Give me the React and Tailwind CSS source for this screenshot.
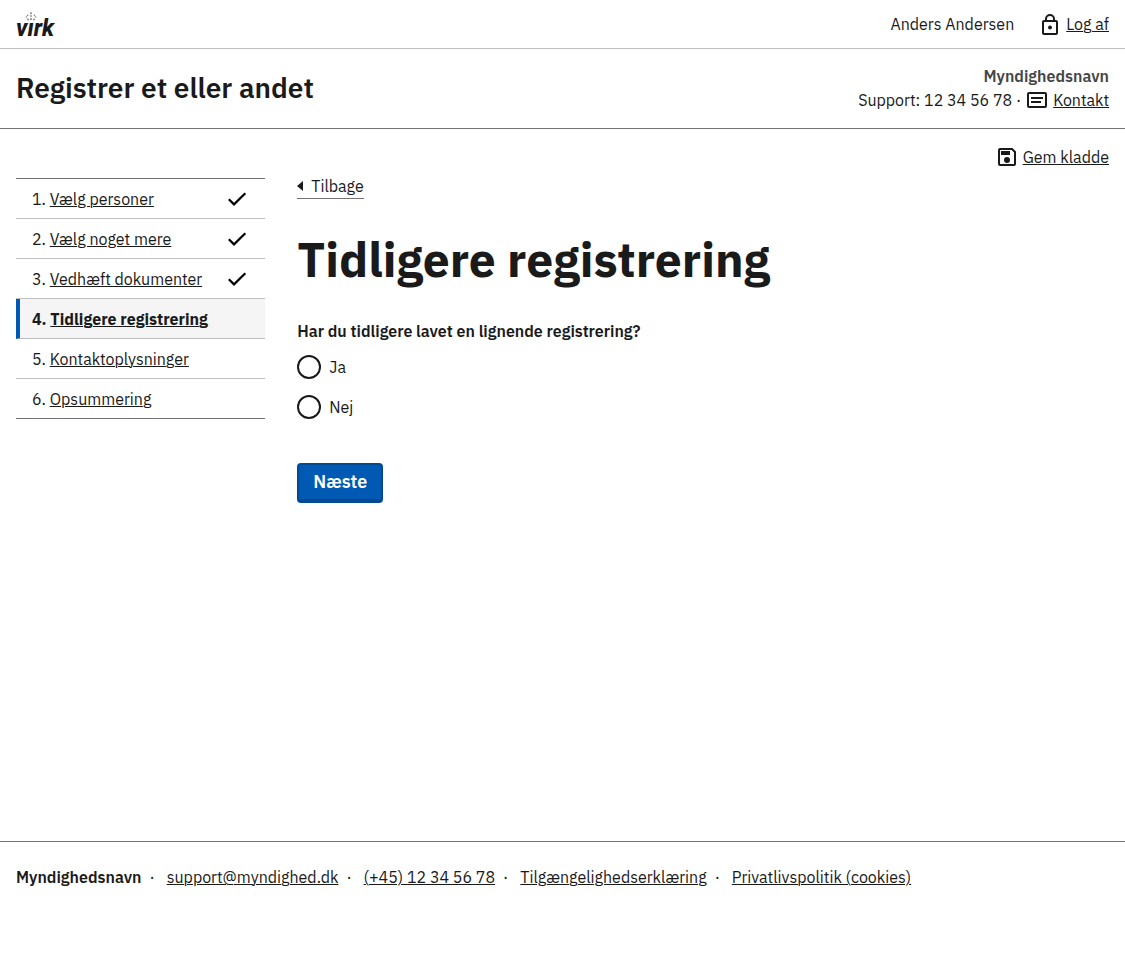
const steps = [
  { label: 'Vælg personer', done: true },
  { label: 'Vælg noget mere', done: true },
  { label: 'Vedhæft dokumenter', done: true },
  { label: 'Tidligere registrering', current: true },
  { label: 'Kontaktoplysninger' },
  { label: 'Opsummering' },
];

const footerLinks = [
  { label: 'support@myndighed.dk', href: 'mailto:support@myndighed.dk' },
  { label: '(+45) 12 34 56 78', href: 'tel:+4512345678' },
  { label: 'Tilgængelighedserklæring', href: '#tilgaengelighed' },
  { label: 'Privatlivspolitik (cookies)', href: '#privatliv' },
];

const link = 'underline decoration-1 underline-offset-1';

function LockIcon() {
  return (
    <svg viewBox="0 0 24 24" className="size-6 shrink-0" fill="none" stroke="currentColor" strokeWidth="2" aria-hidden="true">
      <rect x="5" y="9" width="14" height="13" rx="1" />
      <path d="M8 9V7a4 4 0 0 1 8 0v2" />
      <circle cx="12" cy="15.5" r="2" fill="currentColor" stroke="none" />
    </svg>
  );
}

function MessageIcon() {
  return (
    <svg viewBox="0 0 24 24" className="size-6 shrink-0" fill="none" stroke="currentColor" strokeWidth="2" aria-hidden="true">
      <rect x="3" y="5" width="18" height="14" rx="1" />
      <path d="M6 10h12M6 14h10" />
    </svg>
  );
}

function SaveIcon() {
  return (
    <svg viewBox="0 0 24 24" className="size-6 shrink-0" fill="none" stroke="currentColor" strokeWidth="2" aria-hidden="true">
      <path d="M5 4h12l3 3v12a1 1 0 0 1-1 1H5a1 1 0 0 1-1-1V5a1 1 0 0 1 1-1z" />
      <path d="M6 6h9v4H6z" fill="currentColor" stroke="none" />
      <circle cx="12" cy="15" r="3" fill="currentColor" stroke="none" />
    </svg>
  );
}

function CheckIcon() {
  return (
    <svg viewBox="0 0 24 24" className="size-6 shrink-0" fill="none" stroke="black" strokeWidth="2.2" role="img" aria-label="Udfyldt">
      <path d="M3.8 12.2 9 17.4 20.3 6.2" />
    </svg>
  );
}

function Logo() {
  return (
    <svg viewBox="0 0 44 32" className="h-8 w-11 overflow-visible" role="img" aria-label="Virk">
      <text x="0" y="28" fill="#1a1a1a" fontFamily="Roboto, sans-serif" fontSize="23" fontWeight="800" fontStyle="italic">
        vırk
      </text>
      <g fill="#8a8a8a">
        <circle cx="15" cy="5.2" r="1" />
        <circle cx="15" cy="8" r="0.9" />
        <circle cx="15" cy="11" r="1.1" />
        <circle cx="11.6" cy="7.4" r="0.8" />
        <circle cx="18.4" cy="7.4" r="0.8" />
        <circle cx="10.4" cy="9" r="0.8" />
        <circle cx="19.6" cy="9" r="0.8" />
        <circle cx="12" cy="11.4" r="1" />
        <circle cx="18" cy="11.4" r="1" />
      </g>
    </svg>
  );
}

export default function App() {
  return (
    <div className="flex min-h-screen flex-col bg-white font-['IBM_Plex_Sans','Noto_Sans',sans-serif] text-base text-[#1a1a1a]">
      <header>
        <div className="flex h-[49px] items-center justify-between border-b border-[#bfbfbf] px-4">
          <a href="#forside"><Logo /></a>
          <div className="flex items-center gap-6">
            <span>Anders Andersen</span>
            <a href="#log-af" className={`flex items-center gap-1 ${link}`}><LockIcon />Log af</a>
          </div>
        </div>
        <div className="flex items-center justify-between border-b border-[#747474] px-4 pt-[15px] pb-4">
          <p className="text-[28px] leading-9 font-semibold">Registrer et eller andet</p>
          <div className="text-right leading-6">
            <p className="font-semibold text-[#454545]">Myndighedsnavn</p>
            <p className="flex items-center justify-end gap-1">
              <span>Support: 12 34 56 78 ·</span>
              <a href="#kontakt" className={`flex items-center gap-1 ${link}`}><MessageIcon />Kontakt</a>
            </p>
          </div>
        </div>
      </header>

      <div className="flex justify-end px-4 pt-4">
        <a href="#gem" className={`flex items-center gap-1 leading-6 ${link}`}><SaveIcon />Gem kladde</a>
      </div>

      <div className="grid grow grid-cols-4 items-start gap-8 px-4 pt-[9px]">
        <nav aria-label="Trin" className="border-y border-[#747474]">
          <ol className="divide-y divide-[#bfbfbf]">
            {steps.map((step, i) => (
              <li
                key={step.label}
                className={step.current ? 'border-l-4 border-l-[#0059b3] bg-[#f5f5f5] pl-3 font-bold' : 'pl-4'}
              >
                <div className="flex h-[39px] items-center justify-between pr-4">
                  <span>
                    {i + 1}. <a href={`#trin-${i + 1}`} className={link}>{step.label}</a>
                  </span>
                  {step.done && <CheckIcon />}
                </div>
              </li>
            ))}
          </ol>
        </nav>

        <main className="col-span-3">
          <a href="#tilbage" className="flex w-fit items-center gap-2 border-b border-[#747474] pb-1 leading-4">
            <svg viewBox="0 0 6 10" className="h-2.5 w-1.5" fill="currentColor" aria-hidden="true"><path d="M6 0v10L0 5z" /></svg>
            Tilbage
          </a>
          <h1 className="mt-8 text-5xl leading-14 font-bold">Tidligere registrering</h1>
          <form className="mt-8">
            <fieldset>
              <legend className="leading-6 font-semibold">Har du tidligere lavet en lignende registrering?</legend>
              <div className="mt-3 flex flex-col items-start gap-4">
                {['Ja', 'Nej'].map((answer) => (
                  <label key={answer} className="flex items-center gap-2">
                    <input
                      type="radio"
                      name="tidligere"
                      value={answer}
                      className="size-6 appearance-none rounded-full border-2 border-[#1a1a1a] bg-white checked:border-8"
                    />
                    {answer}
                  </label>
                ))}
              </div>
            </fieldset>
            <button
              type="button"
              className="mt-11 h-10 rounded-sm border-2 border-b-4 border-[#004993] bg-[#0059b3] px-3.5 text-lg leading-6 font-semibold text-white"
            >
              Næste
            </button>
          </form>
        </main>
      </div>

      <footer className="flex h-[120px] flex-wrap items-start border-t border-[#747474] px-4 pt-[23px] leading-6">
        <span className="font-semibold">Myndighedsnavn</span>
        {footerLinks.map((item) => (
          <span key={item.label} className="flex">
            <span className="pr-3 pl-2">·</span>
            <a href={item.href} className={link}>{item.label}</a>
          </span>
        ))}
      </footer>
    </div>
  );
}
